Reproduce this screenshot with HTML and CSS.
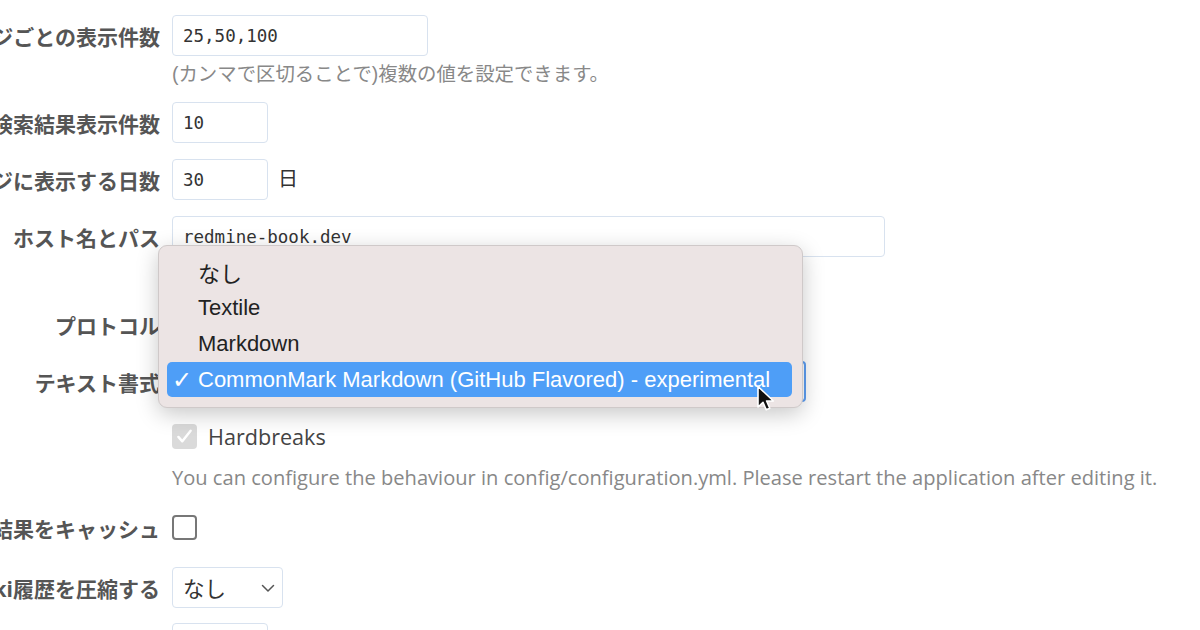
FILE: index.html
```html
<!DOCTYPE html>
<html lang="ja">
<head>
  <meta charset="UTF-8" />
  <title>設定 - 表示</title>
  <link rel="stylesheet" href="styles.css">
</head>
<body>

  <div class="settings">
    <div class="row">
      <label class="lbl">ページごとの表示件数</label>
      <div class="field">
        <input class="txt mono w-mid" type="text" value="25,50,100" />
        <em class="hint">(カンマで区切ることで)複数の値を設定できます。</em>
      </div>
    </div>

    <div class="row">
      <label class="lbl">ページごとの検索結果表示件数</label>
      <div class="field">
        <input class="txt mono w-small" type="text" value="10" />
      </div>
    </div>

    <div class="row">
      <label class="lbl">プロジェクトの活動ページに表示する日数</label>
      <div class="field inline">
        <input class="txt mono w-small" type="text" value="30" />
        <span class="unit">日</span>
      </div>
    </div>

    <div class="row host">
      <label class="lbl">ホスト名とパス</label>
      <div class="field">
        <input class="txt mono w-large" type="text" value="redmine-book.dev" />
        <em class="hint">例: redmine-book.dev</em>
      </div>
    </div>

    <div class="row">
      <label class="lbl">プロトコル</label>
      <div class="field">
        <div class="sel w-proto"><span>https</span></div>
      </div>
    </div>

    <div class="row">
      <label class="lbl">テキスト書式</label>
      <div class="field">
        <div class="sel sel-focus w-format"><span>CommonMark Markdown (GitHub Flavored) - experimental</span></div>
      </div>
    </div>

    <div class="row row-check">
      <span class="lbl lbl-empty"></span>
      <div class="field inline">
        <span class="box box-disabled">
          <svg viewBox="0 0 24 24" width="21" height="21"><path d="M5 12.5l4.5 5L19 5.5" fill="none" stroke="#fff" stroke-width="2.8" stroke-linecap="round" stroke-linejoin="round"/></svg>
        </span>
        <span class="check-text">Hardbreaks</span>
      </div>
    </div>

    <div class="row row-info">
      <span class="lbl lbl-empty"></span>
      <em class="info">You can configure the behaviour in config/configuration.yml. Please restart the application after editing it.</em>
    </div>

    <div class="row row-cache">
      <label class="lbl lbl-box">テキスト書式の変換結果をキャッシュ</label>
      <div class="field inline">
        <span class="box"></span>
      </div>
    </div>

    <div class="row row-wiki">
      <label class="lbl">Wiki履歴を圧縮する</label>
      <div class="field">
        <div class="sel sel-wiki w-wiki">
          <span>なし</span>
          <svg class="chev" viewBox="0 0 16 16" width="16" height="16"><path d="M2.5 5.5L8 11l5.5-5.5" fill="none" stroke="#555" stroke-width="1.5" stroke-linecap="round" stroke-linejoin="round"/></svg>
        </div>
      </div>
    </div>

    <div class="row">
      <label class="lbl">Atomフィードの最大出力件数</label>
      <div class="field">
        <input class="txt mono w-small" type="text" value="15" />
      </div>
    </div>
  </div>

  <!-- open popup of the text formatting select -->
  <div class="menu">
    <div class="item">なし</div>
    <div class="item">Textile</div>
    <div class="item">Markdown</div>
    <div class="item active"><span class="tick">✓</span>CommonMark Markdown (GitHub Flavored) - experimental</div>
  </div>

  <svg class="cursor" viewBox="0 0 20 28" width="20" height="28">
    <path d="M2 1.5v20.5l5-4.6 3.2 7.4 3.6-1.6-3.2-7.2h6.8z" fill="#111" stroke="#fff" stroke-width="1.6" stroke-linejoin="round"/>
  </svg>

</body>
</html>
```

FILE: styles.css
```css
body {
  margin: 0;
  padding-top: 15px;
  background: #fff;
  color: #333;
  font-family: "Open Sans", "Noto Sans CJK JP", sans-serif;
  overflow: hidden;
}

.settings {
  width: 1200px;
}

.row {
  display: flex;
  gap: 12px;
  margin-bottom: 16px;
}

.lbl {
  width: 160px;
  flex: none;
  height: 41px;
  display: flex;
  align-items: center;
  justify-content: flex-end;
  white-space: nowrap;
  font-weight: bold;
  font-size: 21px;
  color: #555;
}

.lbl-box {
  height: 25px;
}

.lbl-empty {
  height: auto;
}

.field {
  display: flex;
  flex-direction: column;
  align-items: flex-start;
}

.field.inline {
  flex-direction: row;
  align-items: center;
  gap: 10px;
}

.txt {
  box-sizing: border-box;
  height: 41px;
  margin: 0;
  padding: 0 10px;
  border: 1px solid #d8e2ef;
  border-radius: 4px;
  background: #fff;
  color: #333;
  outline: none;
}

.mono {
  font-family: "DejaVu Sans Mono", monospace;
  font-size: 17.5px;
}

.w-mid { width: 256px; }
.w-small { width: 96px; }
.w-large { width: 713px; }

.hint {
  font-style: normal;
  font-family: "Liberation Sans", "Noto Sans CJK JP", sans-serif;
  font-size: 19.4px;
  line-height: 24px;
  margin-top: 6px;
  color: #888;
}

.host {
  margin-bottom: 17px;
}

.unit {
  font-size: 20px;
  color: #333;
  align-self: flex-start;
  padding-top: 4px;
}

.sel {
  box-sizing: border-box;
  height: 41px;
  display: flex;
  align-items: center;
  justify-content: space-between;
  padding: 0 10px;
  border: 1px solid #d8e2ef;
  border-radius: 4px;
  background: #fff;
  font-size: 19px;
  color: #333;
}

.sel-wiki {
  font-size: 21.5px;
}

.sel-focus {
  border: 2px solid #5e9ff3;
}

.w-proto { width: 130px; }
.w-format { width: 634px; }
.w-wiki { width: 111px; }

.chev {
  margin-right: -4px;
}

.row-check {
  margin-top: 20px;
  margin-bottom: 15px;
}

.box {
  box-sizing: border-box;
  width: 25px;
  height: 25px;
  border: 2px solid #777;
  border-radius: 4px;
  display: flex;
  align-items: center;
  justify-content: center;
  background: #fff;
}

.box-disabled {
  border: none;
  background: #dadada;
}

.check-text {
  font-size: 21.6px;
  color: #444;
  margin-left: 1px;
}

.info {
  font-style: normal;
  font-size: 20.1px;
  line-height: 24px;
  color: #888;
  white-space: nowrap;
}

.row-info {
  margin-bottom: 25px;
}

.row-cache {
  margin-bottom: 27px;
}

.row-wiki {
  margin-bottom: 15px;
}

.menu {
  position: absolute;
  left: 158px;
  top: 245px;
  width: 645px;
  box-sizing: border-box;
  padding: 8px 10px 10px 8px;
  background: #ece4e4;
  border: 1px solid #cfc9c9;
  border-radius: 9px;
  box-shadow: 0 6px 22px rgba(0, 0, 0, 0.22);
  font-family: "Liberation Sans", "Noto Sans CJK JP", sans-serif;
  font-size: 22px;
  color: #222;
}

.item {
  height: 36px;
  display: flex;
  align-items: center;
  padding-left: 31px;
  position: relative;
  border-radius: 5px;
  white-space: nowrap;
}

.item.active {
  background: #4e9ef7;
  color: #fff;
  height: 35px;
}

.tick {
  position: absolute;
  left: 5px;
  font-family: "DejaVu Sans", sans-serif;
  font-size: 24px;
}

.cursor {
  position: absolute;
  left: 756px;
  top: 385px;
}
```
